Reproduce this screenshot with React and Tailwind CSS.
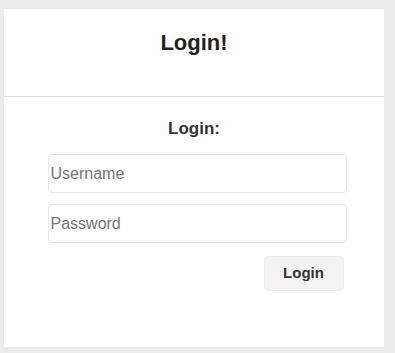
export default function App() {
  return (
    <div className="w-[395px] h-[353px] bg-[#ebebeb] pt-[9px] pl-[4px] pr-[11px] pb-[6px]" style={{ fontFamily: '"Liberation Sans", Arial, sans-serif' }}>
      <div className="bg-white w-[380px] h-[338px] flex flex-col">
        <div className="h-[88px] border-b border-[#e0e0e0] flex justify-center pt-[20px]">
          <h1 className="text-[22px] leading-[28px] font-bold text-[#222]">Login!</h1>
        </div>
        <div className="flex flex-col items-center pt-[21px]">
          <h2 className="text-[17px] leading-[22px] font-bold text-[#333]">Login:</h2>
          <div className="w-[299px] ml-[6px] flex flex-col gap-[11px] mt-[14px]">
            <input
              type="text"
              placeholder="Username"
              className="h-[39px] w-full border border-[#e6e6e6] rounded-[4px] px-[2px] text-[16px] text-[#333] placeholder:text-[#757575] outline-none"
            />
            <input
              type="password"
              placeholder="Password"
              className="h-[39px] w-full border border-[#e6e6e6] rounded-[4px] px-[2px] text-[16px] text-[#333] placeholder:text-[#757575] outline-none"
            />
          </div>
          <div className="w-[299px] ml-[6px] flex justify-end mt-[13px] pr-[3px]">
            <button className="w-[80px] h-[35px] bg-[#f3f3f3] border border-[#ececec] rounded-[4px] text-[15px] font-bold text-[#333]">
              Login
            </button>
          </div>
        </div>
      </div>
    </div>
  );
}
